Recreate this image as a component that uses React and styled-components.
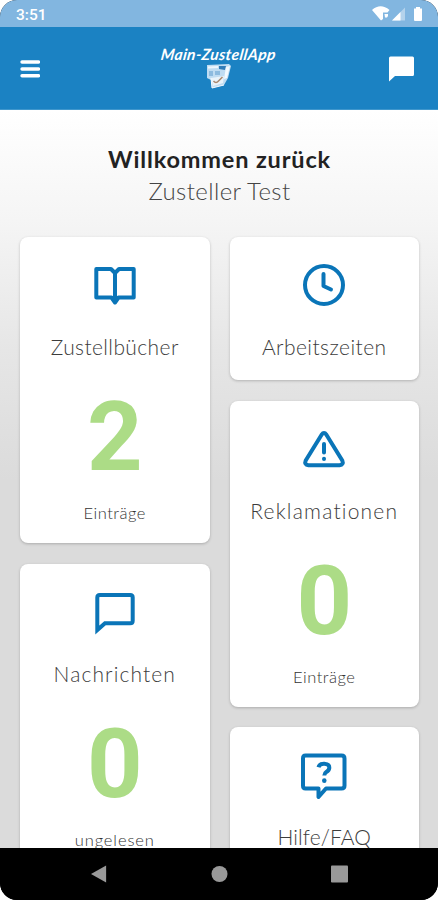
import styled, { createGlobalStyle } from "styled-components";

const GlobalStyle = createGlobalStyle`
  * {
    box-sizing: border-box;
  }
  body {
    margin: 0;
    background: white;
    font-family: Lato, "Open Sans", sans-serif;
  }
`;

const Phone = styled.div`
  display: flex;
  flex-direction: column;
  width: 438px;
  height: 900px;
  overflow: hidden;
  border-radius: 17px;
  background-color: #000;
`;

const StatusBar = styled.div`
  display: flex;
  flex-shrink: 0;
  justify-content: space-between;
  align-items: center;
  height: 27px;
  padding: 2px 14px 0 16px;
  background-color: #82b6e0;
`;

const Time = styled.span`
  color: white;
  font: 500 15.5px/16px Roboto, sans-serif;
`;

const StatusIcons = styled.svg`
  width: 52px;
  height: 18px;
  margin-top: -3px;
`;

const Header = styled.header`
  display: grid;
  grid-template-columns: 60px 1fr 60px;
  flex-shrink: 0;
  height: 83px;
  background-color: #1b82c3;
  border-bottom: 1px solid #3f97cd;
`;

const HeaderButton = styled.button`
  display: flex;
  justify-content: center;
  align-items: center;
  padding: ${({ $right }) => ($right ? "2px 13px 0 0" : "2px 0 0")};
  border: none;
  background: none;
`;

const Brand = styled.div`
  display: flex;
  flex-direction: column;
  align-items: center;
  padding-top: 18px;
`;

const BrandName = styled.span`
  color: white;
  font-size: 15.5px;
  font-weight: 700;
  font-style: italic;
  line-height: 18px;
  letter-spacing: ${({ $track }) => $track}px;
  white-space: nowrap;
  transform: skewX(-8deg);
`;

const Main = styled.main`
  flex: 1;
  min-height: 0;
  overflow: hidden;
  padding: 33px 19px 0 20px;
  background: linear-gradient(#ffffff 0, #f5f5f5 110px, #e6e6e6 240px, #dbdbdb 370px);
`;

const Welcome = styled.div`
  display: flex;
  flex-direction: column;
  align-items: center;
  height: 94px;
`;

const Greeting = styled.h1`
  margin: 0;
  color: #222;
  font-size: 23.5px;
  font-weight: 700;
  line-height: 32px;
  letter-spacing: ${({ $track }) => $track}px;
`;

const UserName = styled.p`
  margin: 0;
  color: #444;
  font-size: 24px;
  font-weight: 300;
  line-height: 32px;
  letter-spacing: ${({ $track }) => $track}px;
`;

const Columns = styled.div`
  display: grid;
  grid-template-columns: 1fr 1fr;
  gap: 20px;
`;

const Column = styled.div`
  display: flex;
  flex-direction: column;
  gap: 20.5px;
`;

const Card = styled.section`
  display: flex;
  flex-direction: column;
  align-items: center;
  flex-shrink: 0;
  height: ${({ $tall }) => ($tall ? "306px" : "143px")};
  padding-top: 24px;
  border-radius: 8px;
  background-color: white;
  box-shadow: 0 1px 3px rgba(0, 0, 0, 0.22);
`;

const CardIcon = styled.svg`
  width: 48px;
  height: 48px;
  flex-shrink: 0;
  fill: none;
  stroke: #0a75b8;
  stroke-width: 4;
  stroke-linejoin: round;
  stroke-linecap: round;
`;

const CardTitle = styled.h2`
  margin: 25px 0 0;
  color: #3c3c3c;
  font-size: 21px;
  font-weight: 300;
  line-height: 26px;
  letter-spacing: ${({ $track }) => $track}px;
  white-space: nowrap;
`;

const Count = styled.div`
  margin-top: 31px;
  color: #acdc86;
  font: 700 97px/92px Roboto, sans-serif;
`;

const CountLabel = styled.div`
  margin-top: 19px;
  color: #333;
  font-size: 16.5px;
  font-weight: 300;
  line-height: 22px;
  letter-spacing: ${({ $track }) => $track}px;
`;

const NavBar = styled.nav`
  display: flex;
  flex-shrink: 0;
  justify-content: center;
  align-items: center;
  gap: 103px;
  height: 52px;
  background-color: black;
`;

const NavIcon = styled.svg`
  width: 17px;
  height: 18px;
  fill: #999;
`;

const icons = {
  book: (
    <path d="M24 12 20 8H5.300V36.500H20.500L24 41.500 27.500 36.500H42.700V8H28L24 12V39" />
  ),
  clock: (
    <>
      <circle cx="24" cy="24" r="19" />
      <path d="M23.500 13v12l7.500 3.500" />
    </>
  ),
  warning: (
    <>
      <path d="M21.600 9.700Q24 6.500 26.400 9.700L42.300 35.500Q44 39.700 39.500 40.300H8.500Q4 39.700 5.700 35.500Z" />
      <path d="M24 19v8.500M24 33.800v.1" />
    </>
  ),
  message: (
    <path
      strokeLinejoin="miter"
      d="M6.300 42V9.500Q6.300 7 8.800 7H39.200Q41.700 7 41.700 9.500V32.700Q41.700 35.200 39.200 35.200H14Z"
    />
  ),
  help: (
    <>
      <path d="M5.500 4.500H41.500Q44.500 4.500 44.500 7.500V34.700Q44.500 37.500 41.500 37.500H26L18.500 46V37.500H5.500Q3 37.500 3 34.700V7.500Q3 4.500 5.500 4.500Z" />
      <path strokeLinecap="butt" d="M18.500 16.200Q19.500 12.500 24.300 12.700Q29.500 13 29.300 17Q29 19.500 26.300 21Q24.300 22.300 24.300 24.500" />
      <path d="M24.300 29.600v.1" strokeWidth="4.500" />
    </>
  ),
};

const leftCards = [
  { icon: "book", title: "Zustellbücher", track: 0.4, count: 2, label: "Einträge", labelTrack: 0.5 },
  { icon: "message", title: "Nachrichten", track: 1.1, count: 0, label: "ungelesen", labelTrack: 0.9 },
];

const rightCards = [
  { icon: "clock", title: "Arbeitszeiten", track: 0.45 },
  { icon: "warning", title: "Reklamationen", track: 1.2, count: 0, label: "Einträge", labelTrack: 0.5 },
  { icon: "help", title: "Hilfe/FAQ", track: 0.1 },
];

const MenuCard = ({ icon, title, track, count, label, labelTrack }) => (
  <Card $tall={count !== undefined}>
    <CardIcon viewBox="0 0 48 48">{icons[icon]}</CardIcon>
    <CardTitle $track={track}>{title}</CardTitle>
    {count !== undefined && (
      <>
        <Count>{count}</Count>
        <CountLabel $track={labelTrack}>{label}</CountLabel>
      </>
    )}
  </Card>
);

const App = () => {
  return (
    <Phone>
      <GlobalStyle />
      <StatusBar>
        <Time>3:51</Time>
        <StatusIcons viewBox="0 0 52 18" fill="white">
          <path d="M0 6Q8.500-1.500 17.500 6L15.500 8.500H11V15L9 16.500Z" />
          <path d="M12.500 10h3.500v2l-1 1.500h-2z" />
          <path d="M20 16.500 33 3.500v13Z" opacity=".4" />
          <path d="M20 16.500 28.500 8v8.500Z" />
          <path d="M42 4.500h2V3h4v1.500h2V16q0 1-1 1h-6q-1 0-1-1Z" />
        </StatusIcons>
      </StatusBar>
      <Header>
        <HeaderButton aria-label="menu">
          <svg width="20" height="18" viewBox="0 0 20 18" stroke="white" strokeWidth="3.400" strokeLinecap="round">
            <path d="M2 2h16.500M2 9h16.500M2 15.800h16.500" />
          </svg>
        </HeaderButton>
        <Brand>
          <BrandName $track={0.4}>Main-ZustellApp</BrandName>
          <svg width="26" height="26" viewBox="0 0 26 26">
            <path d="M1 2 23 1 25 3 22 15 18 22 6 25 5 17 1 15Z" fill="#bfdcf2" />
            <path d="M2 3.500 12 3v2L2 5.500Z" fill="#edf6fd" />
            <path d="M13 3h7l-1 4-6-1Z" fill="#327db8" />
            <path d="M3 8h4v5H3ZM9 8h5v4H9Z" fill="#8dbbdf" />
            <path d="m20 4 4-1-3 12-3 1Z" fill="#f3faff" />
            <path d="M5 15 18 13 17 20 7 23Z" fill="#e9f3fa" />
            <path d="M5 15 6 25 18 22" fill="none" stroke="#f5faff" />
            <path d="M7.500 18q2.500 3 5 0l4-4" fill="none" stroke="#a98970" strokeWidth="1.500" />
          </svg>
        </Brand>
        <HeaderButton $right aria-label="messages">
          <svg width="26" height="26" viewBox="0 0 26 26" fill="white">
            <path d="M0 25.500V2Q0 .5 1.500.5H23.500Q25 .5 25 2V18.500Q25 20 23.500 20H6Z" />
          </svg>
        </HeaderButton>
      </Header>
      <Main>
        <Welcome>
          <Greeting $track={0.85}>Willkommen zurück</Greeting>
          <UserName $track={0.4}>Zusteller Test</UserName>
        </Welcome>
        <Columns>
          <Column>
            {leftCards.map((card) => (
              <MenuCard key={card.title} {...card} />
            ))}
          </Column>
          <Column>
            {rightCards.map((card) => (
              <MenuCard key={card.title} {...card} />
            ))}
          </Column>
        </Columns>
      </Main>
      <NavBar>
        <NavIcon viewBox="0 0 18 18">
          <path d="M0 9 16 0v18Z" />
        </NavIcon>
        <NavIcon viewBox="0 0 18 18">
          <circle cx="9" cy="9" r="8.500" />
        </NavIcon>
        <NavIcon viewBox="0 0 18 18">
          <rect width="18" height="18" rx="1" />
        </NavIcon>
      </NavBar>
    </Phone>
  );
};

export default App;
